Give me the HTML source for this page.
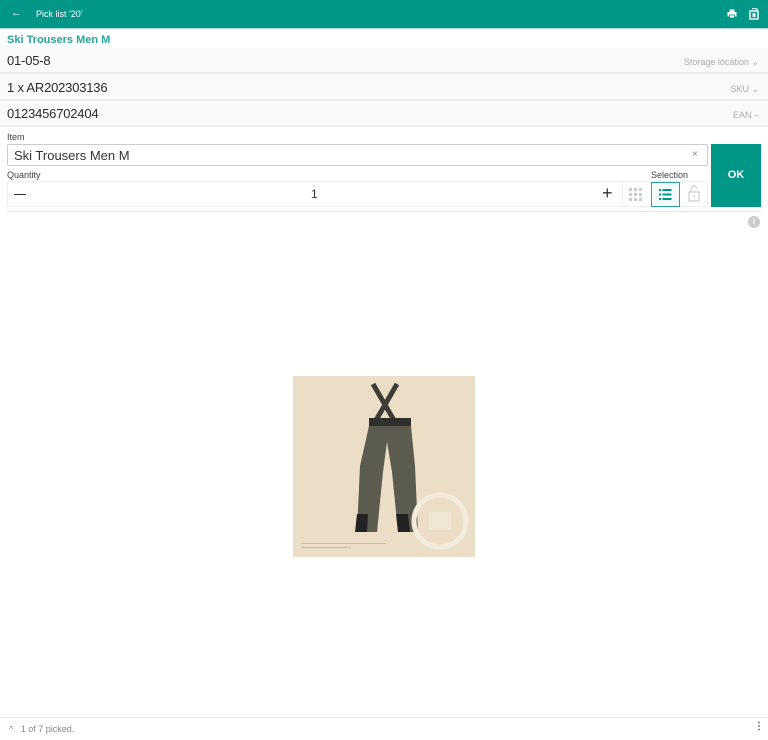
<!DOCTYPE html>
<html><head><style>
*{margin:0;padding:0;box-sizing:border-box}
body{width:768px;height:740px;background:#fff;font-family:"Liberation Sans",sans-serif;position:relative;overflow:hidden;color:#333}
.a{position:absolute}
.row{position:absolute;left:0;width:768px;height:26px;background:#fafafa;border-bottom:2px solid #ececec}
.row .v{position:absolute;left:7px;top:5px;font-size:13px;color:#2a2a2a;letter-spacing:-0.2px}
.row .r{position:absolute;right:9px;top:9px;font-size:9px;color:#aaa}
</style></head><body>
<div class="a" style="left:0;top:0;width:768px;height:28px;background:#009688"></div>
<div class="a" style="left:0;top:28px;width:768px;height:1px;background:#b2dfdb"></div>
<div class="a" style="left:11px;top:7px;color:#fff;font-size:11px">←</div>
<div class="a" style="left:36px;top:9px;color:#fff;font-size:9px">Pick list '20'</div>
<svg class="a" style="left:727px;top:9px" width="10" height="10" viewBox="0 0 10 10"><rect x="2.5" y="0.5" width="5" height="2.5" fill="#fff"/><rect x="0.5" y="3" width="9" height="4.5" fill="#fff"/><rect x="2.5" y="6" width="5" height="3" fill="#fff" stroke="#009688" stroke-width="0.8"/></svg>
<svg class="a" style="left:749px;top:8px" width="10" height="12" viewBox="0 0 10 12"><rect x="1" y="3" width="8" height="8" fill="none" stroke="#fff" stroke-width="1.4"/><rect x="3.5" y="5" width="3" height="4" fill="#fff"/><path d="M3 0.8h5v2" stroke="#fff" fill="none"/></svg>
<div class="a" style="left:7px;top:34px;font-size:11px;color:#26a69a;font-weight:bold">Ski Trousers Men M</div>
<div class="row" style="top:48px"><span class="v">01-05-8</span><span class="r">Storage location ⌄</span></div>
<div class="row" style="top:75px"><span class="v">1 x AR202303136</span><span class="r">SKU ⌄</span></div>
<div class="row" style="top:101px"><span class="v">0123456702404</span><span class="r">EAN –</span></div>
<div class="a" style="left:7px;top:132px;font-size:9px;color:#444">Item</div>
<div class="a" style="left:7px;top:144px;width:701px;height:22px;border:1px solid #ccc;border-radius:2px"></div>
<div class="a" style="left:14px;top:148px;font-size:13px;color:#333">Ski Trousers Men M</div>
<div class="a" style="left:692px;top:149px;font-size:10px;color:#888">×</div>
<div class="a" style="left:7px;top:170px;font-size:9px;color:#444">Quantity</div>
<div class="a" style="left:651px;top:170px;font-size:9px;color:#444">Selection</div>
<div class="a" style="left:7px;top:181px;width:701px;height:26px;border:1px solid #eee;border-radius:2px"></div>
<div class="a" style="left:14px;top:194px;width:12px;height:1px;background:#333"></div>
<div class="a" style="left:311px;top:187px;font-size:12px;color:#333">1</div>
<div class="a" style="left:602px;top:183px;font-size:18px;color:#333;font-weight:300">+</div>
<div class="a" style="left:622px;top:181px;width:1px;height:26px;background:#eee"></div>
<svg class="a" style="left:629px;top:188px" width="13" height="13"><g fill="#ccc"><rect x="0" y="0" width="3" height="3"/><rect x="5" y="0" width="3" height="3"/><rect x="10" y="0" width="3" height="3"/><rect x="0" y="5" width="3" height="3"/><rect x="5" y="5" width="3" height="3"/><rect x="10" y="5" width="3" height="3"/><rect x="0" y="10" width="3" height="3"/><rect x="5" y="10" width="3" height="3"/><rect x="10" y="10" width="3" height="3"/></g></svg>
<div class="a" style="left:651px;top:182px;width:29px;height:25px;border:1px solid #26a69a;background:#f4fbfa"></div>
<svg class="a" style="left:659px;top:189px" width="13" height="11"><g fill="#009688"><rect x="0" y="0" width="2" height="2"/><rect x="3.5" y="0" width="9" height="2"/><rect x="0" y="4.5" width="2" height="2"/><rect x="3.5" y="4.5" width="9" height="2"/><rect x="0" y="9" width="2" height="2"/><rect x="3.5" y="9" width="9" height="2"/></g></svg>
<svg class="a" style="left:688px;top:185px" width="12" height="17"><path d="M3 7V4a3 3 0 0 1 6 0" fill="none" stroke="#ccc" stroke-width="1.2"/><rect x="1" y="7" width="10" height="9" fill="none" stroke="#ccc" stroke-width="1.2"/><rect x="5.5" y="10.5" width="1.5" height="2" fill="#ccc"/></svg>
<div class="a" style="left:711px;top:144px;width:50px;height:63px;background:#009688;color:#fff;font-size:11px;font-weight:bold;text-align:center;line-height:63px">OK</div>
<div class="a" style="left:7px;top:211px;width:754px;height:1px;background:#e6e6e6"></div>
<div class="a" style="left:748px;top:216px;width:12px;height:12px;border-radius:50%;background:#ccc;color:#fff;font-size:8px;text-align:center;line-height:12px;font-weight:bold">i</div>
<svg class="a" style="left:293px;top:376px" width="182" height="181" viewBox="0 0 182 181">
<rect width="182" height="181" fill="#ecdec6"/>
<path d="M80 8l22 38M104 8l-22 38" stroke="#3d3c37" stroke-width="5"/>
<rect x="76" y="42" width="42" height="8" fill="#2f2f2c"/>
<path d="M76 50h42l4 40 3 66h-20l-6-60-5-30-4 30-6 60h-20l3-66z" fill="#5c5b50"/>
<path d="M64 138h11l-1 18h-12zM103 138h12l2 18h-12z" fill="#222"/>
<circle cx="147" cy="145" r="26" fill="none" stroke="#f3ebdc" stroke-width="5"/>
<rect x="136" y="136" width="22" height="18" fill="#f0e6d4"/>
<rect x="8" y="167" width="85" height="1" fill="#c9bca5"/><rect x="8" y="171" width="50" height="1" fill="#c9bca5"/>
</svg>
<div class="a" style="left:0;top:717px;width:768px;height:1px;background:#e6e6e6"></div>
<div class="a" style="left:9px;top:724px;font-size:9px;color:#888">^&nbsp;&nbsp; 1 of 7 picked.</div>
<div class="a" style="left:754px;top:721px;font-size:10px;color:#555;font-weight:bold">⋮</div>
</body></html>
